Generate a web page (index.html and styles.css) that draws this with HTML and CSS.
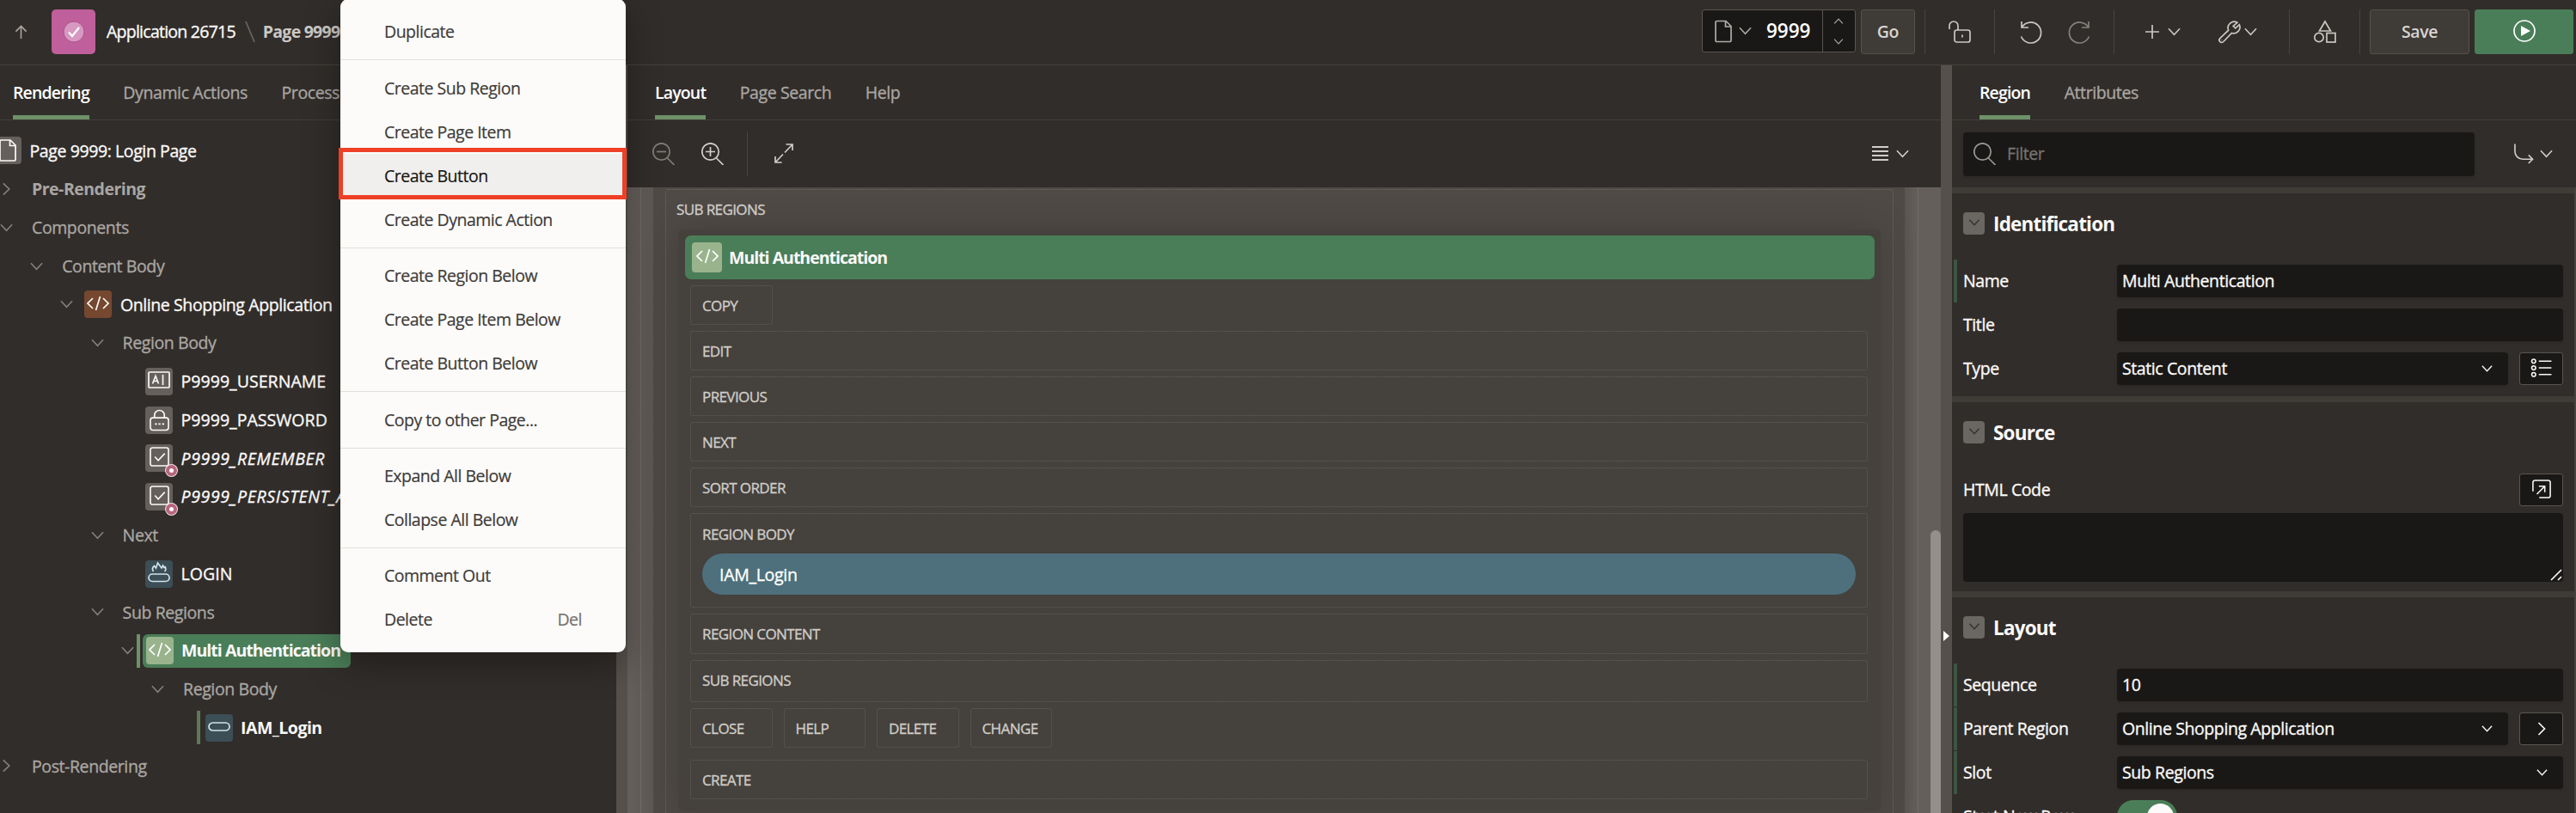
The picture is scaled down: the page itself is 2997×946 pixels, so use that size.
FILE: index.html
```html
<!DOCTYPE html>
<html lang="en">
<head>
<meta charset="utf-8">
<title>Page Designer</title>
<link rel="stylesheet" href="styles.css">
</head>
<body>
<svg class="sprite" aria-hidden="true">
  <symbol id="chev" viewBox="0 0 16 10"><path d="M1 1l7 7.5L15 1"/></symbol>
  <symbol id="code" viewBox="0 0 26 18"><path d="M7 3L1 9l6 6M19 3l6 6-6 6M15.500 1l-5 16"/></symbol>
  <symbol id="page" viewBox="0 0 20 26"><path d="M3 1h10l6 6v16.500a1.500 1.500 0 0 1-1.500 1.500h-15A1.500 1.500 0 0 1 1 23.500V2.500A1.500 1.500 0 0 1 2.500 1zM12.500 1v6.500H19"/></symbol>
  <symbol id="check" viewBox="0 0 24 24"><rect x="1" y="1" width="22" height="22" rx="2.500"/><path d="M6.500 12l4 4.500L18.500 8"/></symbol>
  <symbol id="search" viewBox="0 0 26 26"><circle cx="10.500" cy="10.500" r="9.700"/><path d="M17.500 18l8 8"/></symbol>
</svg>

<header class="topbar">
  <svg class="ic up" viewBox="0 0 16 18"><path d="M8 17V1.500M1.500 8L8 1.500 14.500 8"/></svg>
  <span class="app-icon"><svg viewBox="0 0 26 26"><circle cx="13" cy="13" r="12"/><path d="M7 13.500l4 4.500 8-10"/></svg></span>
  <span class="crumb">Application 26715</span>
  <svg class="slash" viewBox="0 0 12 26"><path d="M1 1l10 24"/></svg>
  <span class="crumb current">Page 9999</span>
  <div class="tools">
    <div class="page-picker">
      <svg class="ic pg"><use href="#page"/></svg>
      <svg class="ic chev"><use href="#chev"/></svg>
      <span class="page-num">9999</span>
      <span class="stepper"><svg class="ic flip"><use href="#chev"/></svg><svg class="ic"><use href="#chev"/></svg></span>
    </div>
    <span class="btn go">Go</span>
    <i class="rule r1"></i>
    <svg class="ic big lock" viewBox="0 0 26 26"><path d="M1 10V6a5 5 0 0 1 10 0v5"/><rect x="7" y="11" width="18" height="14" rx="2.500"/><path d="M16 16.500v3"/></svg>
    <i class="rule r2"></i>
    <svg class="ic big undo" viewBox="0 0 26 26"><path d="M2 1v7h8M2.500 7.500A12 12 0 1 1 1.500 18.500"/></svg>
    <svg class="ic big redo" viewBox="0 0 26 26"><path d="M24 1v7h-8M23.500 7.500A12 12 0 1 0 24.500 18.500"/></svg>
    <i class="rule r3"></i>
    <svg class="ic plus" viewBox="0 0 16 16"><path d="M8 0v16M0 8h16"/></svg>
    <svg class="ic chev c1"><use href="#chev"/></svg>
    <svg class="ic big wrench" viewBox="0 0 26 26"><path d="M22 2.200A7.300 7.300 0 0 0 11.600 11.200L1.800 20.600a2.700 2.700 0 0 0 4 3.900l9.600-10A7.300 7.300 0 0 0 24.300 4.600L19.800 8.800l-2.600-2.500z"/><path d="M4 22.200v.6"/></svg>
    <svg class="ic chev c2"><use href="#chev"/></svg>
    <i class="rule r4"></i>
    <svg class="ic big shapes" viewBox="0 0 26 26"><path d="M13 1l6.500 11h-13z"/><circle cx="6" cy="19.500" r="5.200"/><rect x="15" y="14.500" width="10" height="10.500"/></svg>
    <i class="rule r5"></i>
    <span class="btn save">Save</span>
    <span class="btn run"><svg viewBox="0 0 26 26"><circle cx="13" cy="13" r="12"/><path d="M9 7v12l11-6z"/></svg></span>
  </div>
</header>

<main class="panes">
  <section class="left">
    <nav class="tabs"><span class="tab on">Rendering</span><span class="tab">Dynamic Actions</span><span class="tab">Processing</span></nav>
    <ul class="tree">
      <li class="root"><i class="tw"></i><b class="ti gray"><svg class="pg"><use href="#page"/></svg></b><span class="node">Page 9999: Login Page</span></li>
      <li class="l0 grp strong"><i class="tw shut"><svg><use href="#chev"/></svg></i><span>Pre-Rendering</span></li>
      <li class="l0 grp"><i class="tw"><svg><use href="#chev"/></svg></i><span>Components</span></li>
      <li class="l1 grp"><i class="tw"><svg><use href="#chev"/></svg></i><span>Content Body</span></li>
      <li class="l2"><i class="tw"><svg><use href="#chev"/></svg></i><b class="ti brown"><svg class="cd"><use href="#code"/></svg></b><span class="node">Online Shopping Application</span></li>
      <li class="l3 grp"><i class="tw"><svg><use href="#chev"/></svg></i><span>Region Body</span></li>
      <li class="l4"><i class="tw"></i><b class="ti gray"><svg class="fld" viewBox="0 0 26 20"><rect x="1" y="1" width="24" height="18" rx="1"/><path d="M5.500 14.500L9 5.500l3.500 9M6.700 11.500h4.600M17.500 4v12"/></svg></b><span class="node caps">P9999_USERNAME</span></li>
      <li class="l4"><i class="tw"></i><b class="ti gray"><svg class="pw" viewBox="0 0 24 26"><rect x="1" y="10" width="22" height="15" rx="3"/><path d="M6 10V7a6 6 0 0 1 12 0v3M6.500 17.500h2.500M10.800 17.500h2.500M15.300 17.500h2.500"/></svg></b><span class="node caps">P9999_PASSWORD</span></li>
      <li class="l4"><i class="tw"></i><b class="ti gray"><svg class="ck"><use href="#check"/></svg><i class="dot"></i></b><span class="node caps it">P9999_REMEMBER</span></li>
      <li class="l4"><i class="tw"></i><b class="ti gray"><svg class="ck"><use href="#check"/></svg><i class="dot"></i></b><span class="node caps it">P9999_PERSISTENT_AUTH</span></li>
      <li class="l3 grp"><i class="tw"><svg><use href="#chev"/></svg></i><span>Next</span></li>
      <li class="l4"><i class="tw"></i><b class="ti blue"><svg class="flame" viewBox="0 0 26 24"><rect x="1" y="14" width="24" height="8.500" rx="4.200"/><path d="M6.500 11C4.500 8 5.500 6 7.500 4.500l2 2.500L11.500 1l4.500 6 1.500-3c.8 1.500 1 2 1.500 2.500l1-1C21.500 8 21 9.500 19.500 11"/></svg></b><span class="node caps">LOGIN</span></li>
      <li class="l3 grp"><i class="tw"><svg><use href="#chev"/></svg></i><span>Sub Regions</span></li>
      <li class="l4 sel"><i class="tw"><svg><use href="#chev"/></svg></i><i class="mark"></i><span class="pick"><b class="ti lime"><svg class="cd"><use href="#code"/></svg></b><span class="node">Multi Authentication</span></span></li>
      <li class="l5 grp"><i class="tw"><svg><use href="#chev"/></svg></i><span>Region Body</span></li>
      <li class="l6 iam"><i class="tw"></i><i class="mark"></i><b class="ti blue"><svg class="pill" viewBox="0 0 26 11"><rect x="1" y="1" width="24" height="9" rx="4.500"/></svg></b><span class="node bold">IAM_Login</span></li>
      <li class="l0 grp"><i class="tw shut"><svg><use href="#chev"/></svg></i><span>Post-Rendering</span></li>
    </ul>
  </section>
  <div class="split"></div>
  <section class="center">
    <nav class="tabs"><span class="tab on">Layout</span><span class="tab">Page Search</span><span class="tab">Help</span></nav>
    <div class="canvas-tools">
      <svg class="ic dim" viewBox="0 0 26 26"><use href="#search"/><path d="M5 10.500h11"/></svg>
      <svg class="ic zin" viewBox="0 0 26 26"><use href="#search"/><path d="M5 10.500h11M10.500 5v11"/></svg>
      <i class="rule"></i>
      <svg class="ic expand" viewBox="0 0 22 23"><path d="M13.500 1H21v7M21 1l-9 9.500M1 15v7h7.500M1 22l9-9.500"/></svg>
      <svg class="ic lines" viewBox="0 0 19 17"><path d="M0 1h19M0 6h19M0 11h19M0 16h19"/></svg>
      <svg class="ic chev"><use href="#chev"/></svg>
    </div>
    <div class="canvas">
      <div class="sheet">
        <div class="outer">
          <span class="lab top">SUB REGIONS</span>
          <div class="region">
            <div class="region-head"><b class="ti lime"><svg class="cd"><use href="#code"/></svg></b><span>Multi Authentication</span></div>
            <div class="slots">
              <div class="slot small">COPY</div>
              <div class="slot">EDIT</div>
              <div class="slot">PREVIOUS</div>
              <div class="slot">NEXT</div>
              <div class="slot">SORT ORDER</div>
              <div class="slot body"><span>REGION BODY</span><div class="iam-btn">IAM_Login</div></div>
              <div class="slot">REGION CONTENT</div>
              <div class="slot sub">SUB REGIONS</div>
              <div class="quad"><div class="slot small">CLOSE</div><div class="slot small">HELP</div><div class="slot small">DELETE</div><div class="slot small">CHANGE</div></div>
              <div class="slot">CREATE</div>
            </div>
          </div>
        </div>
      </div>
      <i class="thumb"></i>
    </div>
  </section>
  <div class="split right-split"><i></i></div>
  <section class="right">
    <nav class="tabs"><span class="tab on">Region</span><span class="tab">Attributes</span></nav>
    <div class="filter-row">
      <div class="filter"><svg class="ic"><use href="#search"/></svg><span>Filter</span></div>
      <svg class="ic turn" viewBox="0 0 24 24"><path d="M1 0v9a9.500 9.500 0 0 0 9.500 9.500H22.500M17.500 13.500l5 5-5 5"/></svg>
      <svg class="ic chev"><use href="#chev"/></svg>
    </div>
    <div class="props">
      <div class="group">
        <h2><i><svg><use href="#chev"/></svg></i>Identification</h2>
        <div class="prop changed"><label>Name</label><div class="field">Multi Authentication</div></div>
        <div class="prop"><label>Title</label><div class="field"></div></div>
        <div class="prop"><label>Type</label><div class="field">Static Content<svg class="ic"><use href="#chev"/></svg></div><span class="side"><svg class="ic list" viewBox="0 0 26 24"><circle cx="3.500" cy="3.500" r="2.500"/><circle cx="3.500" cy="12" r="2.500"/><circle cx="3.500" cy="20.500" r="2.500"/><path d="M10 3.500h16M10 12h16M10 20.500h16"/></svg></span></div>
      </div>
      <div class="group source">
        <h2><i><svg><use href="#chev"/></svg></i>Source</h2>
        <div class="prop code-row"><label>HTML Code</label><span class="side"><svg class="ic out" viewBox="0 0 24 24"><path d="M1 15V3.500A2.500 2.500 0 0 1 3.500 1h17A2.500 2.500 0 0 1 23 3.500v17a2.500 2.500 0 0 1-2.500 2.500H9M8.500 8.500H16V16M16 8.500L6 18.500"/></svg></span></div>
        <div class="area"><svg viewBox="0 0 14 14"><path d="M1 13L13 1M9 13l4-4"/></svg></div>
      </div>
      <div class="group">
        <h2><i><svg><use href="#chev"/></svg></i>Layout</h2>
        <div class="prop changed"><label>Sequence</label><div class="field">10</div></div>
        <div class="prop changed"><label>Parent Region</label><div class="field">Online Shopping Application<svg class="ic"><use href="#chev"/></svg></div><span class="side"><svg class="ic next" viewBox="0 0 10 16"><path d="M1.500 1l7 7-7 7"/></svg></span></div>
        <div class="prop changed"><label>Slot</label><div class="field">Sub Regions<svg class="ic"><use href="#chev"/></svg></div></div>
        <div class="prop tog"><label>Start New Row</label><span class="toggle"><i></i></span></div>
      </div>
      <i class="thumb"></i>
    </div>
  </section>
</main>

<div class="menu">
  <div class="mi">Duplicate</div>
  <hr>
  <div class="mi">Create Sub Region</div>
  <div class="mi">Create Page Item</div>
  <div class="mi hot">Create Button</div>
  <div class="mi">Create Dynamic Action</div>
  <hr>
  <div class="mi">Create Region Below</div>
  <div class="mi">Create Page Item Below</div>
  <div class="mi">Create Button Below</div>
  <hr>
  <div class="mi">Copy to other Page...</div>
  <hr>
  <div class="mi">Expand All Below</div>
  <div class="mi">Collapse All Below</div>
  <hr>
  <div class="mi">Comment Out</div>
  <div class="mi">Delete<kbd>Del</kbd></div>
</div>
<div class="callout"></div>
</body>
</html>
```

FILE: styles.css
```css
* { box-sizing: border-box; }
html, body { margin: 0; height: 946px; overflow: hidden; }
body {
  width: 2997px;
  background: #312d2a;
  color: #fbf9f8;
  font: 500 19.500px/1 "Open Sans", "Noto Sans", sans-serif;
  letter-spacing: -0.4px;
  -webkit-text-stroke: 0.35px currentColor;
  display: flex;
  flex-direction: column;
  position: relative;
  white-space: nowrap;
}
.sprite { position: absolute; width: 0; height: 0; }
svg { fill: none; stroke: currentColor; stroke-width: 1.700; flex: none; display: block; overflow: visible; }
i, b { font-style: normal; flex: none; display: block; }

/* top bar */
.topbar { height: 76px; flex: none; border-bottom: 1px solid #45423d; display: flex; align-items: center; padding-bottom: 1px; }
.topbar .up { width: 15px; height: 17px; margin-left: 17px; color: #aaa6a1; }
.app-icon { width: 51px; height: 52px; margin-left: 28px; border-radius: 5px; background: #bf5f9b; display: grid; place-items: center; }
.app-icon svg { width: 26px; height: 26px; }
.app-icon circle { fill: #d798c1; stroke: #a9518a; stroke-width: 1; }
.app-icon path { stroke: #fff; stroke-width: 2.200; }
.crumb { margin-left: 13px; letter-spacing: -0.75px; }
.slash { width: 12px; height: 26px; margin-left: 11px; color: #6b6661; }
.crumb.current { margin-left: 9px; font-weight: 700; color: #cbc8c5; -webkit-text-stroke: 0; }
.tools { margin-left: auto; margin-right: 3px; display: flex; align-items: center; height: 52px; color: #cac7c3; flex: none; }
.ic.big { width: 26px; height: 26px; }
.ic.chev { width: 15px; height: 10px; }
.page-picker { width: 179px; height: 50px; margin: 0 6px 2px 0; border: 1px solid #5a5550; border-radius: 3px; background: #191816; display: flex; align-items: center; }
.page-picker .pg { width: 20px; height: 27px; margin-left: 14px; color: #b0aca8; }
.page-picker .chev { margin-left: 8px; color: #aaa6a2; }
.page-num { margin-left: 17px; width: 52px; color: #fff; font-size: 22.500px; font-weight: 600; letter-spacing: 0; -webkit-text-stroke: 0; }
.stepper { margin-left: auto; width: 38px; height: 100%; border-left: 1px solid #5a5550; display: flex; flex-direction: column; justify-content: center; gap: 17px; padding-left: 12px; color: #a9a5a1; }
.stepper svg { width: 12px; height: 7px; }
.flip { transform: rotate(180deg); }
.btn { height: 52px; border: 1px solid #55514b; border-radius: 3px; background: #3f3b36; color: #d8d5d2; font-weight: 600; display: grid; place-items: center; -webkit-text-stroke: 0; }
.go { width: 63px; }
.rule { width: 1px; height: 52px; background: #48443f; }
.r1 { margin-left: 11px; }
.lock { margin-left: 27px; }
.r2 { margin-left: 27px; }
.undo { margin-left: 29px; }
.redo { margin-left: 30px; color: #85807c; }
.r3 { margin-left: 27px; }
.plus { width: 16px; height: 16px; margin-left: 36px; }
.c1 { margin-left: 10px; }
.wrench { margin-left: 44px; }
.c2 { margin-left: 4px; }
.r4 { margin-left: 37px; }
.shapes { margin-left: 28px; }
.r5 { margin-left: 27px; }
.save { width: 116px; margin-left: 11px; }
.run { width: 115px; margin-left: 6px; background: #4a7e58; border-color: #4a7e58; color: #fff; }
.run svg { width: 26px; height: 26px; margin-top: -2px; }
.run path { fill: #fff; stroke: none; }

/* panes */
.panes { flex: 1; min-height: 0; display: grid; grid-template-columns: 717px 13px 1528px 13px 726px; }
.panes > section { overflow: hidden; display: flex; flex-direction: column; position: relative; }
.split { background: #55504b; }
.right-split { display: flex; align-items: flex-start; justify-content: center; padding-top: 658px; }
.right-split i { border: 6.500px solid transparent; border-left: 7px solid #fff; border-right: 0; }
.tabs { height: 64px; flex: none; border-bottom: 1px solid #413d39; display: flex; padding-left: 15px; color: #aaa6a2; }
.tab { height: 63px; padding-top: 22px; margin-right: 39.500px; letter-spacing: -0.4px; }
.tab.on { color: #fff; border-bottom: 5px solid #6f9168; font-weight: 600; letter-spacing: -0.85px; -webkit-text-stroke: 0; }
.center .tabs, .right .tabs { padding-left: 32px; }

/* tree */
.tree { list-style: none; margin: 0; padding: 13px 0 0; }
.tree li { height: 44.760px; display: flex; align-items: center; }
.tw { width: 37px; height: 10px; color: #85817d; }
.tw svg { width: 15px; height: 10px; }
.tw.shut svg { transform: rotate(-90deg); }
.tree li:not(.grp) > .tw { width: 28px; }
.root { margin-left: -35px; }
.l1 { padding-left: 35.200px; } .l2 { padding-left: 70.400px; } .l3 { padding-left: 105.600px; }
.l4 { padding-left: 141px; } .l5 { padding-left: 176px; } .l6 { padding-left: 211px; }
.grp { color: #aaa6a2; }
.grp.strong { font-weight: 700; letter-spacing: -0.5px; -webkit-text-stroke: 0; }
.node { margin-left: 9.500px; }
.caps { letter-spacing: 0.050px; }
.it { font-style: italic; letter-spacing: 0.650px; }
.bold { font-weight: 700; letter-spacing: -0.5px; -webkit-text-stroke: 0; }
.ti { width: 32px; height: 32px; border-radius: 4px; display: grid; place-items: center; position: relative; }
.gray { background: #65605c; }
.brown { background: #75482f; }
.blue { background: #3c4e56; color: #cfe3ea; }
.lime { background: #99b48d; color: #fff; }
.cd { width: 26px; height: 18px; margin-top: -3px; }
.ti .pg { width: 20px; height: 26px; }
.fld { width: 26px; height: 20px; margin-top: -3px; }
.pw { width: 23px; height: 26px; }
.ck { width: 23px; height: 23px; margin-top: -3px; }
.flame { width: 26px; height: 24px; margin-top: -3px; }
.pill { width: 26px; height: 11px; margin-top: -3px; }
.dot { position: absolute; left: 24px; top: 24px; width: 13px; height: 13px; border-radius: 50%; background: #fff; border: 4px solid #b7657d; box-shadow: 0 0 0 1px #efe0e4; }
.mark { width: 3.500px; height: 39px; background: #6f9168; margin-right: 3px; }
.tree li.sel > .tw, .tree li.iam > .tw { width: 18px; }
.pick { height: 39px; background: #4a7e58; border-radius: 6px; display: flex; align-items: center; padding: 0 12px 0 4px; font-weight: 700; letter-spacing: -0.95px; -webkit-text-stroke: 0; }
.iam .mark { margin-right: 6px; opacity: .75; }

/* canvas */
.canvas-tools { height: 78px; flex: none; display: flex; align-items: center; padding-left: 29px; color: #d0cdca; }
.canvas-tools .ic { width: 26px; height: 26px; margin-top: -1px; }
.canvas-tools .dim { color: #817d79; }
.canvas-tools .zin { margin-left: 31px; }
.canvas-tools .rule { margin-left: 27px; }
.canvas-tools .expand { width: 22px; height: 23px; margin-left: 31px; }
.canvas-tools .lines { width: 19px; height: 17px; margin-left: auto; stroke-width: 2; }
.canvas-tools .chev { width: 15px; height: 10px; margin: 0 37px 0 9px; }
.canvas { flex: 1; min-height: 0; overflow: hidden; position: relative; padding: 0 42px 0 30px; background: linear-gradient(90deg, transparent 15px, #706b67 15px, #706b67 16px, transparent 16px, transparent 1501px, #706b67 1501px, #706b67 1502px, transparent 1502px), linear-gradient(90deg, #645f5b 0, #5d5854 30px, #5a5551 1486px, #645f5b 1502px); }
.sheet { height: 740px; background: #4f4a46; padding: 2px 13px 0 14px; }
.outer { height: 760px; border: 1px dotted #6e6964; border-radius: 4px; padding: 14px 14px 0; }
.lab { display: block; }
.lab, .slot { font-size: 17px; line-height: 17px; color: #cfccc8; letter-spacing: -0.6px; }
.lab.top { height: 32px; margin-left: -2px; }
.region { height: 677px; border-radius: 6px; background: #45413c; box-shadow: 0 0 36px rgba(40, 36, 30, .3); padding: 7px 7px 0 8px; }
.region-head { height: 51px; border-radius: 7px; background: #4a7e58; display: flex; align-items: center; padding-left: 8px; font-weight: 700; font-size: 19.500px; letter-spacing: -1px; -webkit-text-stroke: 0; }
.region-head .ti { width: 35px; height: 35px; margin-right: 8px; }
.slots { padding: 7px 8px 0 6px; display: flex; flex-direction: column; gap: 7px; }
.slot { height: 46.100px; border: 1px dotted #635f59; border-radius: 3px; padding: 14px 13px 0; }
.slot.small { width: 95.500px; }
.slot.body { height: 110px; padding-top: 15px; }
.slot.sub { height: 49px; }
.quad { display: flex; gap: 13px; margin-bottom: 7px; }
.iam-btn { height: 48px; margin: 14px 0 0; border-radius: 24px; background: #4d707c; color: #fff; font-size: 19.500px; line-height: 49px; padding-left: 20px; letter-spacing: -0.3px; }
.canvas .thumb { position: absolute; right: 0; top: 399px; width: 12px; height: 400px; border-radius: 6px 6px 0 0; background: #948f8b; }

/* properties */
.filter-row { height: 78px; flex: none; display: flex; align-items: center; padding-left: 13px; color: #d0cdca; }
.filter { width: 595px; height: 51px; border-radius: 4px; background: #191816; display: flex; align-items: center; padding-left: 12px; color: #75716d; box-shadow: 0 2px 3px rgba(0, 0, 0, .1); }
.filter .ic { width: 26px; height: 26px; margin-right: 13px; color: #9a9692; }
.turn { width: 23px; height: 24px; margin-left: 46px; }
.filter-row .chev { margin-left: 7px; }
.props { flex: 1; min-height: 0; overflow: hidden; position: relative; border-right: 2px solid #46423e; }
.props .thumb { position: absolute; right: -2px; top: 2px; width: 2px; height: 395px; background: #8f8b87; }
.group { border-top: 7px solid #3f3b37; height: 243px; padding-top: 22px; }
.source { height: 227px; }
.group h2 { margin: 0 0 29px; height: 26px; font-size: 22.500px; line-height: 27px; font-weight: 700; letter-spacing: -0.8px; display: flex; align-items: center; padding-left: 13px; -webkit-text-stroke: 0; }
.group h2 i { width: 25px; height: 26px; border-radius: 4px; background: #6a6662; color: #35312e; margin-right: 10px; padding: 8px 5.500px; }
.group h2 svg { width: 14px; height: 8px; }
.prop { height: 50px; margin: 0 0 1px 2px; display: flex; align-items: center; padding: 0 13px 0 7px; border-left: 4px solid transparent; }
.changed { border-left-color: #3c5641; }
.prop label { width: 179px; flex: none; }
.field { flex: 1; height: 38px; border-radius: 4px; background: #191816; padding: 0 17px 0 6px; display: flex; align-items: center; justify-content: space-between; box-shadow: 0 2px 3px rgba(0, 0, 0, .12); }
.field svg { width: 15px; height: 8px; }
.side { width: 51px; height: 38px; margin-left: 13px; border: 1px solid #5a5550; border-radius: 3px; background: #191816; display: grid; place-items: center; }
.side .list { width: 25px; height: 22px; margin-top: -3px; }
.side .out { width: 22px; height: 22px; margin-top: -3px; }
.side .next { width: 10px; height: 16px; }
.code-row { margin-bottom: 2px; }
.code-row .side { margin-left: auto; }
.area { height: 80px; margin: 0 13px; border-radius: 4px; background: #191816; position: relative; }
.area svg { position: absolute; right: 1px; bottom: 1px; width: 14px; height: 14px; }
.toggle { width: 70px; height: 38px; border-radius: 19px; background: #4a7e58; padding: 4px; display: flex; justify-content: flex-end; }
.toggle i { width: 31px; height: 31px; border-radius: 50%; background: #fcfbfa; }

/* context menu */
.menu { position: absolute; left: 396px; top: -1px; width: 332px; height: 760px; padding-top: 12.500px; border-radius: 9px; background: #fcfbfa; color: #403c38; box-shadow: 0 12px 40px rgba(0, 0, 0, .35); letter-spacing: -0.5px; -webkit-text-stroke: 0.2px currentColor; }
.mi { height: 51.100px; display: flex; align-items: center; justify-content: space-between; padding: 0 51px; }
.menu hr { height: 1px; margin: 6.600px 0; border: 0; background: #e1dfdc; }
.mi.hot { background: #f0efed; color: #191816; }
.mi kbd { font: inherit; color: #76726e; }
.callout { position: absolute; left: 394px; top: 172px; width: 335px; height: 60px; border: 5px solid #ee4026; }
```
